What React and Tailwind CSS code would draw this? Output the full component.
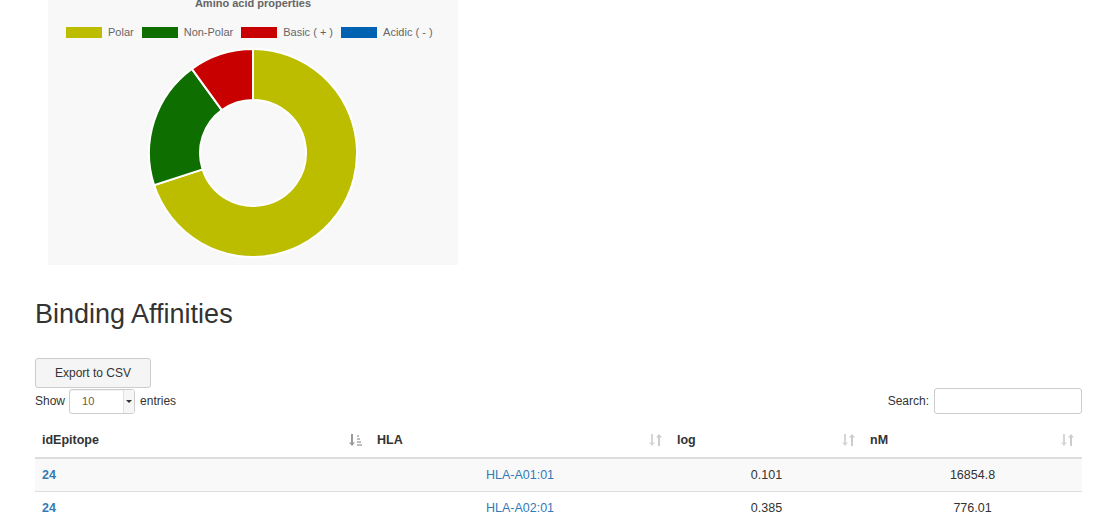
import React from 'react';

const slices = [
    { label: 'Polar', value: 7, color: '#bdbd00' },
    { label: 'Non-Polar', value: 2, color: '#0f6e00' },
    { label: 'Basic ( + )', value: 1, color: '#c80000' },
    { label: 'Acidic ( - )', value: 0, color: '#0062b1' },
];

const rows = [
    { id: 24, hla: 'HLA-A01:01', log: '0.101', nm: '16854.8' },
    { id: 24, hla: 'HLA-A02:01', log: '0.385', nm: '776.01' },
];

const arcPath = (a0, a1, R, r, cx, cy) => {
    const pt = (deg, rad) => {
        const t = (deg * Math.PI) / 180;
        return [cx + rad * Math.sin(t), cy - rad * Math.cos(t)];
    };
    const large = a1 - a0 > 180 ? 1 : 0;
    const [x0, y0] = pt(a0, R);
    const [x1, y1] = pt(a1, R);
    const [x2, y2] = pt(a1, r);
    const [x3, y3] = pt(a0, r);
    return `M${x0} ${y0} A${R} ${R} 0 ${large} 1 ${x1} ${y1} L${x2} ${y2} A${r} ${r} 0 ${large} 0 ${x3} ${y3} Z`;
};

const Donut = () => {
    const total = slices.reduce((s, d) => s + d.value, 0);
    let start = 0;
    return (
        <svg width="210" height="210" viewBox="0 0 210 210">
            {slices.map((d) => {
                if (!d.value) return null;
                const end = start + (d.value / total) * 360;
                const p = arcPath(start, end - 0.001, 104, 53, 105, 105);
                start = end;
                return <path key={d.label} d={p} fill={d.color} stroke="#ffffff" strokeWidth="2" />;
            })}
        </svg>
    );
};

const SortIcon = ({ active }) => (
    <svg width="13" height="14" viewBox="0 0 13 14">
        {active ? (
            <g>
                <path d="M3 1v9" stroke="#9a9a9a" strokeWidth="2" />
                <path d="M0 9.5h6L3 13z" fill="#9a9a9a" />
                <rect x="8" y="2" width="2" height="2" fill="#bdbdbd" />
                <rect x="8" y="5" width="3" height="2" fill="#bdbdbd" />
                <rect x="8" y="8" width="4" height="2" fill="#bdbdbd" />
                <rect x="8" y="11" width="5" height="2" fill="#bdbdbd" />
            </g>
        ) : (
            <g>
                <path d="M3 1v9" stroke="#d6d6d6" strokeWidth="2" />
                <path d="M0 9.5h6L3 13z" fill="#d6d6d6" />
                <path d="M10 4v9" stroke="#cccccc" strokeWidth="2" />
                <path d="M7 4.5h6L10 1z" fill="#cccccc" />
            </g>
        )}
    </svg>
);

const HeaderCell = ({ title, width, active }) => (
    <div className={`flex items-center justify-between pl-[7px] pr-[8px] py-[8px] ${width}`}>
        <span className="text-[12.5px] font-bold leading-[18px] text-[#333]">{title}</span>
        <SortIcon active={active} />
    </div>
);

export default function App() {
    return (
        <div className="min-h-screen bg-white overflow-hidden" style={{ fontFamily: '"Liberation Sans", Arial, sans-serif' }}>
            <div className="ml-[35px] w-[1047px]">
                <div className="ml-[13px] w-[410px] h-[265px] bg-[#f8f8f8] flex flex-col items-center">
                    <div className="-mt-[3px] h-[12px] text-[11px] font-bold leading-[12px] text-[#666]">
                        Amino acid properties
                    </div>
                    <div className="mt-[17px] flex items-center self-start pl-[18px] h-[12px]">
                        {slices.map((d) => (
                            <div key={d.label} className="flex items-center mr-[8px]">
                                <span className="w-[36px] h-[11px] mr-[6px]" style={{ backgroundColor: d.color }} />
                                <span className="text-[11px] leading-[12px] text-[#666]">{d.label}</span>
                            </div>
                        ))}
                    </div>
                    <div className="mt-[10px]">
                        <Donut />
                    </div>
                </div>

                <h2 className="mt-[33px] text-[27px] leading-[33px] text-[#333]">Binding Affinities</h2>

                <button className="mt-[27px] h-[30px] px-[19px] border border-[#ccc] rounded-[3px] bg-[#f5f5f5] text-[12px] text-[#333]">
                    Export to CSV
                </button>

                <div className="flex items-center justify-between h-[26px]">
                    <div className="flex items-center text-[12px] text-[#333]">
                        <span>Show</span>
                        <div className="ml-[4px] mr-[5px] w-[66px] h-[25px] border border-[#ccc] rounded-[3px] bg-white flex items-center shadow-[inset_0_1px_1px_rgba(0,0,0,0.05)]">
                            <span className="flex-1 pl-[12px] text-[11px] text-[#6a5a45]">10</span>
                            <span className="w-[11px] h-full border-l border-[#e2e2e2] bg-[#f6f6f6] flex items-center justify-center">
                                <span className="w-0 h-0 border-l-[3px] border-r-[3px] border-t-[3px] border-l-transparent border-r-transparent border-t-[#333]" />
                            </span>
                        </div>
                        <span>entries</span>
                    </div>
                    <div className="flex items-center text-[12px] text-[#333]">
                        <span>Search:</span>
                        <div className="ml-[5px] w-[148px] h-[26px] border border-[#ccc] rounded-[3px] bg-white" />
                    </div>
                </div>

                <div className="mt-[9px]">
                    <div className="flex border-b-2 border-[#ddd]">
                        <HeaderCell title="idEpitope" width="w-[335px]" active />
                        <HeaderCell title="HLA" width="w-[300px]" />
                        <HeaderCell title="log" width="w-[193px]" />
                        <HeaderCell title="nM" width="w-[219px]" />
                    </div>
                    {rows.map((r, i) => (
                        <div
                            key={r.hla}
                            className={`flex text-[12.5px] leading-[18px] text-[#333] ${i > 0 ? 'border-t border-[#ddd]' : ''} ${i % 2 === 0 ? 'bg-[#f9f9f9]' : 'bg-white'}`}
                        >
                            <div className="w-[335px] pl-[7px] py-[7px] font-bold text-[#337ab7]">{r.id}</div>
                            <div className="w-[300px] py-[7px] text-center text-[#337ab7]">{r.hla}</div>
                            <div className="w-[193px] py-[7px] text-center">{r.log}</div>
                            <div className="w-[219px] py-[7px] text-center">{r.nm}</div>
                        </div>
                    ))}
                </div>
            </div>
        </div>
    );
}
